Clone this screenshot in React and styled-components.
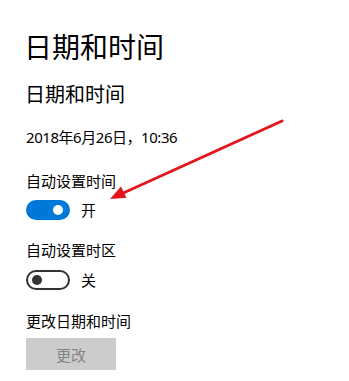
import React from "react";
import styled, { createGlobalStyle } from "styled-components";

const Global = createGlobalStyle`
  html, body { margin: 0; padding: 0; background: #fff; }
  body { font-family: "Noto Sans", "Noto Sans CJK SC", sans-serif; color: #000; }
`;

const Page = styled.div`
  position: relative;
  width: 349px;
  height: 381px;
  overflow: hidden;
  box-sizing: border-box;
  padding: 28px 0 0 26px;
  display: flex;
  flex-direction: column;
  align-items: flex-start;
`;

const Title = styled.h1`
  margin: 0 0 0 -2px;
  font-weight: 400;
  font-size: 28px;
  line-height: 36px;
  font-family: "Noto Sans CJK SC", sans-serif;
`;

const Subtitle = styled.h2`
  margin: 15.5px 0 0 -1px;
  font-weight: 400;
  font-size: 20px;
  line-height: 28px;
  font-family: "Noto Sans CJK SC", sans-serif;
`;

const Text = styled.div`
  margin-top: ${(p) => p.$mt}px;
  font-size: 15px;
  line-height: 20px;
  letter-spacing: ${(p) => (p.$tight ? "-0.45px" : "0")};
  font-family: "Noto Sans", "Noto Sans CJK SC", sans-serif;
`;

const ToggleRow = styled.div`
  margin-top: ${(p) => p.$mt}px;
  display: flex;
  align-items: center;
  gap: 11px;
  height: 20px;
`;

const Track = styled.div`
  box-sizing: border-box;
  width: 44px;
  height: 20px;
  border-radius: 10px;
  display: flex;
  align-items: center;
  padding: 0 ${(p) => (p.$on ? "5px" : "4px")};
  justify-content: ${(p) => (p.$on ? "flex-end" : "flex-start")};
  background: ${(p) => (p.$on ? "#0078d7" : "#fff")};
  border: 2px solid ${(p) => (p.$on ? "#0078d7" : "#333")};
`;

const Knob = styled.div`
  width: 10px;
  height: 10px;
  border-radius: 50%;
  background: ${(p) => (p.$on ? "#fff" : "#333")};
`;

const ToggleLabel = styled.span`
  font-size: 15px;
  line-height: 20px;
  font-family: "Noto Sans CJK SC", sans-serif;
`;

const Button = styled.button`
  margin-top: 7.5px;
  width: 90px;
  height: 32px;
  border: none;
  background: #cccccc;
  color: #858585;
  font-size: 15px;
  font-family: "Noto Sans CJK SC", sans-serif;
  padding: 0;
`;

const Overlay = styled.svg`
  position: absolute;
  left: 0;
  top: 0;
  pointer-events: none;
`;

function Toggle({ on, label, mt }) {
  return (
    <ToggleRow $mt={mt}>
      <Track $on={on}>
        <Knob $on={on} />
      </Track>
      <ToggleLabel>{label}</ToggleLabel>
    </ToggleRow>
  );
}

export default function App() {
  return (
    <>
      <Global />
      <Page>
        <Title>日期和时间</Title>
        <Subtitle>日期和时间</Subtitle>
        <Text $mt={19} $tight>2018年6月26日，10:36</Text>
        <Text $mt={24.5}>自动设置时间</Text>
        <Toggle on mt={9} label="开" />
        <Text $mt={20}>自动设置时区</Text>
        <Toggle on={false} mt={10} label="关" />
        <Text $mt={20.5}>更改日期和时间</Text>
        <Button>更改</Button>
        <Overlay width="349" height="381" viewBox="0 0 349 381">
          <line x1="282" y1="121" x2="120" y2="194.5" stroke="#e3141b" strokeWidth="3" strokeLinecap="round" />
          <polygon points="110,199 126.5,197.8 121,186.5" fill="#e3141b" />
        </Overlay>
      </Page>
    </>
  );
}
